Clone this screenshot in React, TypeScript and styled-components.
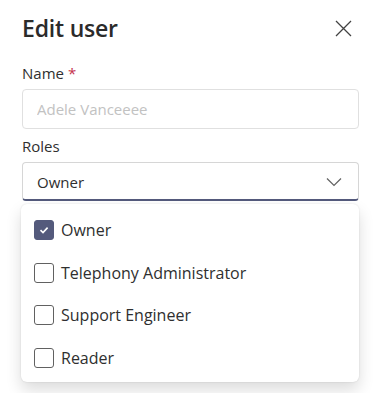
import React from 'react';
import styled, { createGlobalStyle } from 'styled-components';

const GlobalStyle = createGlobalStyle`
  body {
    margin: 0;
    background: #ffffff;
    font-family: "Segoe UI", "Open Sans", "Noto Sans", sans-serif;
    color: #242424;
  }
`;

const Dialog = styled.div`
  position: relative;
  width: 374px;
  height: 393px;
  box-sizing: border-box;
  padding: 12px 15px 0 22px;
`;

const Header = styled.div`
  display: flex;
  justify-content: space-between;
  align-items: center;
  height: 32px;
  margin-bottom: 18px;
`;

const Title = styled.h1`
  margin: 0;
  font-size: 23px;
  font-weight: 600;
  line-height: 32px;
  letter-spacing: -0.2px;
  color: #2b2b2b;
`;

const CloseButton = styled.button`
  display: flex;
  align-items: center;
  justify-content: center;
  width: 24px;
  height: 24px;
  padding: 0;
  border: none;
  background: none;
  color: #424242;
  margin-right: 4px;
`;

const Field = styled.div`
  display: flex;
  flex-direction: column;
  width: 337px;
  margin-bottom: 6px;
`;

const Label = styled.label`
  font-size: 15px;
  line-height: 22px;
  margin-bottom: 5px;
  color: #2f2f2f;
`;

const Required = styled.span`
  color: #c4314b;
  margin-left: 4px;
`;

const Input = styled.input`
  box-sizing: border-box;
  height: 40px;
  padding: 0 14px;
  border: 1px solid #e0e0e0;
  border-radius: 4px;
  font-family: inherit;
  font-size: 15px;
  color: #242424;
  &::placeholder {
    color: #c2c2c2;
  }
`;

const SelectBox = styled.div`
  box-sizing: border-box;
  display: flex;
  align-items: center;
  justify-content: space-between;
  height: 39px;
  padding: 1px 16px 0 14px;
  border: 1px solid #d6d6d6;
  border-bottom: 2px solid #545a7c;
  border-radius: 4px;
  font-size: 15px;
  color: #2f2f2f;
`;

const ListBox = styled.ul`
  position: absolute;
  top: 204px;
  left: 21px;
  width: 338px;
  margin: 0;
  padding: 5px 0 3px;
  list-style: none;
  background: #ffffff;
  border-radius: 6px;
  box-shadow: 0 0 2px rgba(0, 0, 0, 0.12), 0 8px 16px rgba(0, 0, 0, 0.14);
`;

const Option = styled.li`
  display: flex;
  align-items: center;
  gap: 7px;
  height: 42.5px;
  padding-left: 13px;
  font-size: 16px;
  color: #2f2f2f;
`;

const Box = styled.span<{ $checked: boolean }>`
  box-sizing: border-box;
  display: flex;
  align-items: center;
  justify-content: center;
  width: 20px;
  height: 20px;
  border-radius: 3px;
  border: 1px solid ${p => (p.$checked ? '#545a7c' : '#616161')};
  background: ${p => (p.$checked ? '#545a7c' : '#ffffff')};
`;

const roles = [
  { name: 'Owner', checked: true },
  { name: 'Telephony Administrator', checked: false },
  { name: 'Support Engineer', checked: false },
  { name: 'Reader', checked: false },
];

export default function App() {
  return (
    <>
      <GlobalStyle />
      <Dialog>
        <Header>
          <Title>Edit user</Title>
          <CloseButton aria-label="Close">
            <svg width="17" height="17" viewBox="0 0 17 17">
              <path d="M1 1 L16 16 M16 1 L1 16" stroke="currentColor" strokeWidth="1.3" fill="none" />
            </svg>
          </CloseButton>
        </Header>

        <Field>
          <Label>
            Name<Required>*</Required>
          </Label>
          <Input placeholder="Adele Vanceeee" />
        </Field>

        <Field>
          <Label>Roles</Label>
          <SelectBox>
            <span>Owner</span>
            <svg width="16" height="10" viewBox="0 0 16 10">
              <path d="M1 1.5 L8 8.5 L15 1.5" stroke="#616161" strokeWidth="1.2" fill="none" />
            </svg>
          </SelectBox>
        </Field>

        <ListBox>
          {roles.map(role => (
            <Option key={role.name}>
              <Box $checked={role.checked}>
                {role.checked && (
                  <svg width="12" height="12" viewBox="0 0 12 12">
                    <path d="M2.5 6.2 L5 8.6 L9.6 3.6" stroke="#fff" strokeWidth="1.6" fill="none" />
                  </svg>
                )}
              </Box>
              {role.name}
            </Option>
          ))}
        </ListBox>
      </Dialog>
    </>
  );
}
